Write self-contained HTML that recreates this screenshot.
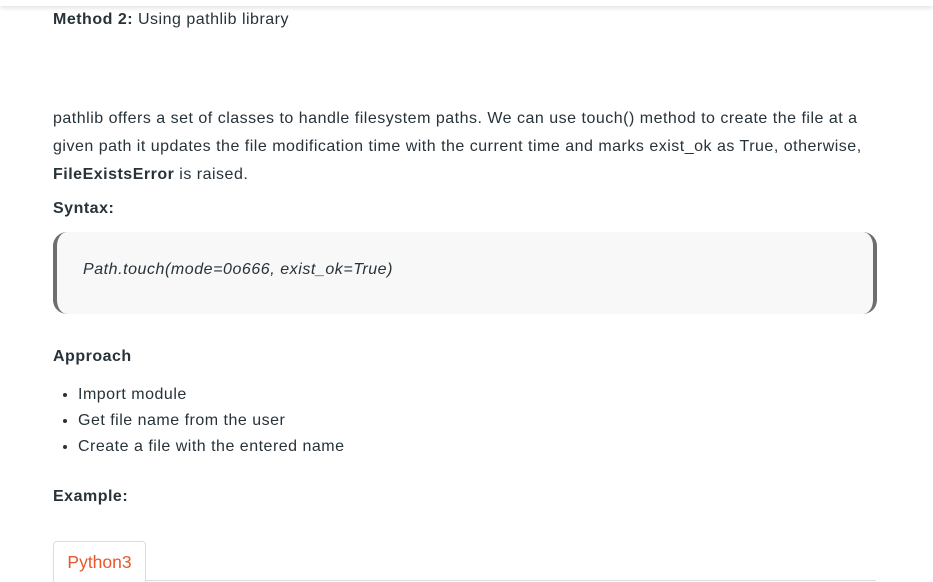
<!DOCTYPE html>
<html><head><style>
body{margin:0;width:933px;height:582px;overflow:hidden;background:#fff;font-family:"Liberation Sans",sans-serif;color:#273239;position:relative}
.t{position:absolute;left:53px;font-size:16px;letter-spacing:0.5px;white-space:nowrap}
b{font-weight:bold}
.top{position:absolute;left:0;top:0;width:933px;height:6px;box-shadow:0 2px 5px rgba(0,0,0,.12);background:#fff}
.code{position:absolute;left:53px;top:232px;width:816px;height:82px;background:#f8f8f8;border-left:4px solid #6e6e6e;border-right:4px solid #6e6e6e;border-radius:14px}
.code span{position:absolute;left:26px;top:29px;font-style:italic;font-size:16px;letter-spacing:0.55px;color:#273239}
ul{position:absolute;left:53px;top:382px;margin:0;padding-left:25px;font-size:16px;letter-spacing:0.5px;line-height:26px}
.tab{position:absolute;left:53px;top:541px;width:93px;height:41px;border:1px solid #ddd;border-bottom:none;border-radius:4px 4px 0 0;background:#fff;color:#e9562c;font-size:17.5px;text-align:center;line-height:40px;box-sizing:border-box}
.line{position:absolute;left:146px;top:580px;width:730px;height:1px;background:#ddd}
</style></head><body>
<div class="top"></div>
<div class="t" style="top:11px"><b>Method 2:</b> Using pathlib library</div>
<div class="t" style="top:105px;line-height:28px">pathlib offers a set of classes to handle filesystem paths. We can use touch() method to create the file at a<br>given path it updates the file modification time with the current time and marks exist_ok as True, otherwise,<br><b>FileExistsError</b> is raised.</div>
<div class="t" style="top:200px"><b>Syntax:</b></div>
<div class="code"><span>Path.touch(mode=0o666, exist_ok=True)</span></div>
<div class="t" style="top:348px"><b>Approach</b></div>
<ul><li>Import module</li><li>Get file name from the user</li><li>Create a file with the entered name</li></ul>
<div class="t" style="top:488px"><b>Example:</b></div>
<div class="tab">Python3</div>
<div class="line"></div>
</body></html>
